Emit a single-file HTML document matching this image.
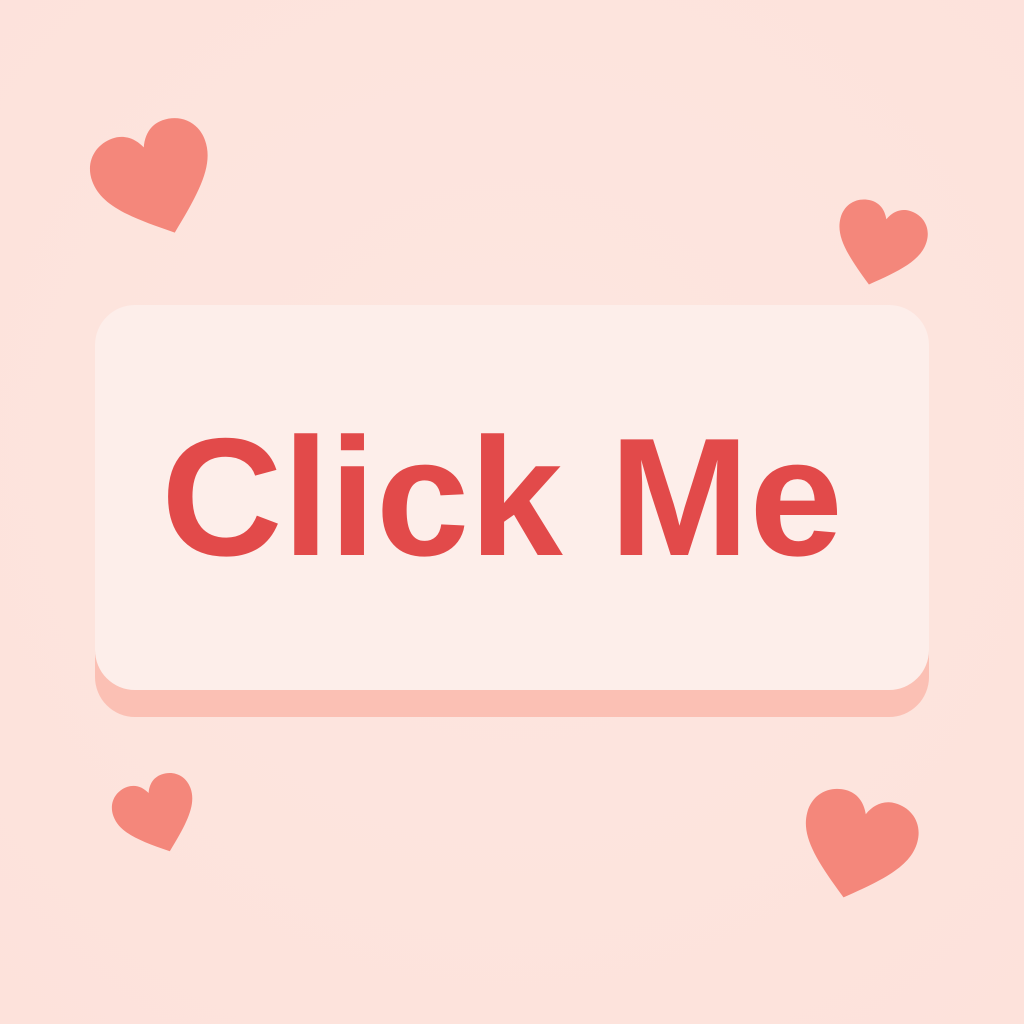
<!DOCTYPE html>
<html><head><meta charset="utf-8"><style>
html,body{margin:0;padding:0}
body{width:1024px;height:1024px;background:radial-gradient(circle at 50% 45%,#fde6e0,#fde2db);position:relative;overflow:hidden}
.shadow{position:absolute;left:95px;top:330px;width:834px;height:387px;border-radius:40px;background:#fbc0b4}
.btn{position:absolute;left:95px;top:305px;width:834px;height:385px;border-radius:40px;background:#fdeeea}
.txt{position:absolute;left:-10px;width:1024px;top:402px;text-align:center;font-family:"Liberation Sans",sans-serif;font-weight:bold;font-size:168px;line-height:190px;color:#e24a4a;letter-spacing:0px}
svg{position:absolute}
</style></head><body>
<div class="shadow"></div>
<div class="btn"></div>
<div class="txt">Click Me</div>
<svg style="left:92px;top:121px;transform:rotate(-20deg)" width="128" height="120" viewBox="0 0 100 94"><path d="M50 90 C20 66 3 50 3 30 C3 14 15 4 29 4 C39 4 46 10 50 19 C54 10 61 4 71 4 C85 4 97 14 97 30 C97 50 80 66 50 90Z" fill="#f4877b"/></svg>
<svg style="left:832px;top:200px;transform:rotate(15deg)" width="95" height="90" viewBox="0 0 100 94"><path d="M50 90 C20 66 3 50 3 30 C3 14 15 4 29 4 C39 4 46 10 50 19 C54 10 61 4 71 4 C85 4 97 14 97 30 C97 50 80 66 50 90Z" fill="#f4877b"/></svg>
<svg style="left:113px;top:775px;transform:rotate(-20deg)" width="88" height="82" viewBox="0 0 100 94"><path d="M50 90 C20 66 3 50 3 30 C3 14 15 4 29 4 C39 4 46 10 50 19 C54 10 61 4 71 4 C85 4 97 14 97 30 C97 50 80 66 50 90Z" fill="#f4877b"/></svg>
<svg style="left:796px;top:790px;transform:rotate(15deg)" width="122" height="114" viewBox="0 0 100 94"><path d="M50 90 C20 66 3 50 3 30 C3 14 15 4 29 4 C39 4 46 10 50 19 C54 10 61 4 71 4 C85 4 97 14 97 30 C97 50 80 66 50 90Z" fill="#f4877b"/></svg>
</body></html>
